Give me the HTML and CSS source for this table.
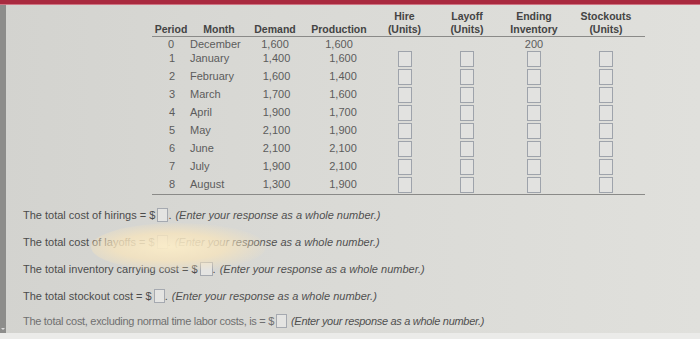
FILE: index.html
```html
<!DOCTYPE html>
<html lang="en">
<head>
<meta charset="utf-8">
<title>Aggregate plan</title>
<link rel="stylesheet" href="styles.css">
</head>
<body>
<div class="screen">
  <div class="topbar"></div>
  <div class="main">
    <div class="scrollbar"><span class="arrow"></span></div>
    <div class="content">
      <table class="plan">
        <colgroup>
          <col class="c-period"><col class="c-month"><col class="c-demand"><col class="c-prod">
          <col class="c-hire"><col class="c-layoff"><col class="c-end"><col class="c-stock">
        </colgroup>
        <thead>
          <tr>
            <th>Period</th><th>Month</th><th>Demand</th><th>Production</th>
            <th>Hire<br>(Units)</th><th>Layoff<br>(Units)</th><th>Ending<br>Inventory</th><th>Stockouts<br>(Units)</th>
          </tr>
        </thead>
        <tbody>
          <tr class="first">
            <td class="num">0</td><td class="month">December</td><td class="val">1,600</td><td class="val prod">1,600</td>
            <td></td><td></td><td class="val">200</td><td></td>
          </tr>
          <tr>
            <td class="num">1</td><td class="month">January</td><td class="val">1,400</td><td class="val prod">1,600</td>
            <td class="in"><span class="box"></span></td><td class="in"><span class="box"></span></td><td class="in"><span class="box"></span></td><td class="in"><span class="box"></span></td>
          </tr>
          <tr>
            <td class="num">2</td><td class="month">February</td><td class="val">1,600</td><td class="val prod">1,400</td>
            <td class="in"><span class="box"></span></td><td class="in"><span class="box"></span></td><td class="in"><span class="box"></span></td><td class="in"><span class="box"></span></td>
          </tr>
          <tr>
            <td class="num">3</td><td class="month">March</td><td class="val">1,700</td><td class="val prod">1,600</td>
            <td class="in"><span class="box"></span></td><td class="in"><span class="box"></span></td><td class="in"><span class="box"></span></td><td class="in"><span class="box"></span></td>
          </tr>
          <tr>
            <td class="num">4</td><td class="month">April</td><td class="val">1,900</td><td class="val prod">1,700</td>
            <td class="in"><span class="box"></span></td><td class="in"><span class="box"></span></td><td class="in"><span class="box"></span></td><td class="in"><span class="box"></span></td>
          </tr>
          <tr>
            <td class="num">5</td><td class="month">May</td><td class="val">2,100</td><td class="val prod">1,900</td>
            <td class="in"><span class="box"></span></td><td class="in"><span class="box"></span></td><td class="in"><span class="box"></span></td><td class="in"><span class="box"></span></td>
          </tr>
          <tr>
            <td class="num">6</td><td class="month">June</td><td class="val">2,100</td><td class="val prod">2,100</td>
            <td class="in"><span class="box"></span></td><td class="in"><span class="box"></span></td><td class="in"><span class="box"></span></td><td class="in"><span class="box"></span></td>
          </tr>
          <tr>
            <td class="num">7</td><td class="month">July</td><td class="val">1,900</td><td class="val prod">2,100</td>
            <td class="in"><span class="box"></span></td><td class="in"><span class="box"></span></td><td class="in"><span class="box"></span></td><td class="in"><span class="box"></span></td>
          </tr>
          <tr>
            <td class="num">8</td><td class="month">August</td><td class="val">1,300</td><td class="val prod">1,900</td>
            <td class="in"><span class="box"></span></td><td class="in"><span class="box"></span></td><td class="in"><span class="box"></span></td><td class="in"><span class="box"></span></td>
          </tr>
        </tbody>
      </table>

      <div class="questions">
        <p class="q">The total cost of hirings = $<span class="ans"></span>. <em>(Enter your response as a whole number.)</em></p>
        <p class="q">The total cost of layoffs = $<span class="ans"></span>. <em>(Enter your response as a whole number.)</em></p>
        <p class="q">The total inventory carrying cost = $<span class="ans wide"></span>. <em>(Enter your response as a whole number.)</em></p>
        <p class="q">The total stockout cost = $<span class="ans"></span>. <em>(Enter your response as a whole number.)</em></p>
        <p class="q last">The total cost, excluding normal time labor costs, is = $<span class="ans"></span> <em>(Enter your response as a whole number.)</em></p>
      </div>
      <div class="glare"></div>
    </div>
  </div>
  <div class="bottombar"></div>
</div>
</body>
</html>
```

FILE: styles.css
```css
html, body {
  margin: 0;
  padding: 0;
}
body {
  width: 700px;
  height: 339px;
  overflow: hidden;
  background: #dcdcd8;
  font-family: "Liberation Sans", Arial, sans-serif;
}
.screen {
  display: flex;
  flex-direction: column;
  width: 700px;
  height: 339px;
}
.topbar {
  height: 5px;
  flex: none;
  background: #a92a3f;
  border-bottom: 1px solid #cf7483;
  box-sizing: border-box;
}
.main {
  flex: 1;
  display: flex;
  min-height: 0;
  background: linear-gradient(to right, #d3d3cf 0%, #d9d9d5 40%, #e0e0dc 100%);
}
.scrollbar {
  width: 6px;
  flex: none;
  background: #8d8d8b;
  display: flex;
  flex-direction: column;
  justify-content: flex-end;
  align-items: center;
}
.arrow {
  width: 0;
  height: 0;
  border-left: 2px solid transparent;
  border-right: 2px solid transparent;
  border-top: 2px solid #dcdcdc;
  margin-bottom: 3px;
}
.content {
  flex: 1;
  position: relative;
  padding: 5px 0 0 17px;
  overflow: hidden;
}
.plan {
  margin-left: 129px;
  border-collapse: collapse;
  table-layout: fixed;
  width: 493px;
  font-size: 11px;
  color: #5c5c5c;
}
.c-period { width: 38px; }
.c-month { width: 58px; }
.c-demand { width: 54px; }
.c-prod { width: 74px; }
.c-hire { width: 57px; }
.c-layoff { width: 68px; }
.c-end { width: 66px; }
.c-stock { width: 78px; }

.plan th {
  font-weight: bold;
  font-size: 10.5px;
  color: #444;
  line-height: 13px;
  height: 26px;
  padding: 0;
  text-align: center;
  vertical-align: bottom;
  border-bottom: 1px solid #8a8a88;
}
.plan td {
  box-sizing: border-box;
  padding: 0 0 3px 0;
  height: 18px;
  line-height: 12px;
  text-align: center;
  vertical-align: middle;
}
.plan td.in {
  padding: 0;
}
.plan tr.first td {
  height: 13px;
  padding: 1px 0 0;
  line-height: 12px;
}
.plan tbody tr:last-child td {
  border-bottom: 1px solid #8a8a88;
}
.plan td.month {
  text-align: left;
}
.plan td.num {
  padding-left: 2px;
}
.plan td.val {
  padding-left: 3px;
}
.plan td.prod {
  padding-left: 8px;
}
.plan td .box {
  display: block;
  box-sizing: border-box;
  width: 14px;
  height: 16px;
  margin: 1px auto;
  border: 1px solid #9ea3ab;
  background: #e2e2e0;
}
.questions {
  margin-top: 6px;
  display: flex;
  flex-direction: column;
}
.q {
  margin: 0;
  height: 27px;
  display: flex;
  align-items: center;
  font-size: 11px;
  color: #4c4c4c;
  white-space: nowrap;
}
.q em {
  margin-left: 4px;
  font-style: italic;
  color: #505050;
}
.q.last {
  color: #707070;
  letter-spacing: -0.3px;
  height: 24px;
}
.ans {
  display: inline-block;
  width: 9px;
  height: 12px;
  margin-left: 2px;
  border: 1px solid #a5a9b0;
  background: #e4e4e2;
}
.ans.wide {
  width: 11px;
}
.glare {
  position: absolute;
  left: 85px;
  top: 218px;
  width: 175px;
  height: 48px;
  border-radius: 50%;
  background: radial-gradient(ellipse at 45% 50%, rgba(250, 236, 200, 0.95) 0%, rgba(246, 228, 190, 0.8) 40%, rgba(240, 230, 210, 0) 75%);
  pointer-events: none;
}
.bottombar {
  height: 6px;
  flex: none;
  background: #ebebe9;
}
```
